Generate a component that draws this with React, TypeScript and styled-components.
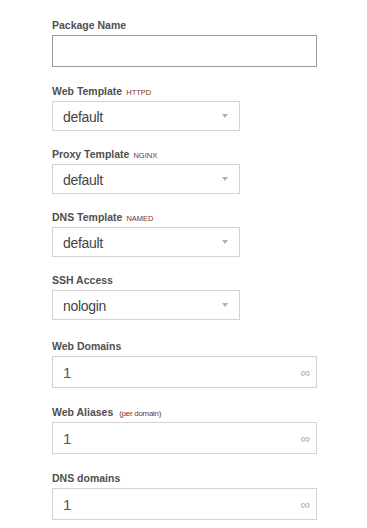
import React from "react";
import styled, { createGlobalStyle } from "styled-components";

const Global = createGlobalStyle`
  html, body { margin: 0; padding: 0; background: #fff; }
  body { font-family: "Liberation Sans", Arial, sans-serif; }
`;

const Form = styled.div`
  display: flex;
  flex-direction: column;
  padding: 18px 0 0 52px;
`;

const Field = styled.div<{ $gap: number }>`
  display: flex;
  flex-direction: column;
  margin-bottom: ${(p) => p.$gap}px;
`;

const Label = styled.div`
  font-size: 10.5px;
  line-height: 12px;
  height: 12px;
  font-weight: bold;
  color: #4f4f4f;
  margin-bottom: 4px;
  padding-top: 1px;
  white-space: nowrap;
`;

const Hint = styled.span<{ $upper?: boolean }>`
  font-weight: normal;
  font-size: ${(p) => (p.$upper ? "7.5px" : "8px")};
  color: #7a3426;
  margin-left: ${(p) => (p.$upper ? "4px" : "6px")};
  letter-spacing: ${(p) => (p.$upper ? "0" : "-0.3px")};
`;

const TextBox = styled.div<{ $dark?: boolean }>`
  box-sizing: border-box;
  width: 265px;
  height: 32px;
  border: 1px solid ${(p) => (p.$dark ? "#9a9a9a" : "#d3d3d3")};
  display: flex;
  align-items: center;
  padding: 0 6px 0 10px;
  font-size: 15px;
  color: #555;
`;

const Value = styled.span`
  flex: 1;
`;

const Infinity = styled.span`
  font-size: 13px;
  color: #aaa;
`;

const SelectBox = styled.div`
  box-sizing: border-box;
  width: 188px;
  height: 30px;
  border: 1px solid #d3d3d3;
  display: flex;
  align-items: center;
  padding: 2px 11px 0 10px;
  font-size: 14px;
  letter-spacing: -0.3px;
  color: #444;
`;

const Arrow = styled.span`
  width: 0;
  height: 0;
  margin-top: -2px;
  border-left: 3.5px solid transparent;
  border-right: 3.5px solid transparent;
  border-top: 4px solid #b0b0b0;
`;

const selects = [
  { label: "Web Template", hint: "HTTPD", value: "default" },
  { label: "Proxy Template", hint: "NGINX", value: "default" },
  { label: "DNS Template", hint: "NAMED", value: "default" },
  { label: "SSH Access", hint: "", value: "nologin" },
];

const limits = [
  { label: "Web Domains", hint: "" },
  { label: "Web Aliases", hint: "(per domain)" },
  { label: "DNS domains", hint: "" },
];

export default function App() {
  return (
    <>
      <Global />
      <Form>
        <Field $gap={17}>
          <Label>Package Name</Label>
          <TextBox $dark />
        </Field>
        {selects.map((s, i) => (
          <Field key={s.label} $gap={i === selects.length - 1 ? 19 : 16}>
            <Label>
              {s.label}
              {s.hint && <Hint $upper>{s.hint}</Hint>}
            </Label>
            <SelectBox>
              <Value>{s.value}</Value>
              <Arrow />
            </SelectBox>
          </Field>
        ))}
        {limits.map((l) => (
          <Field key={l.label} $gap={17}>
            <Label>
              {l.label}
              {l.hint && <Hint>{l.hint}</Hint>}
            </Label>
            <TextBox>
              <Value>1</Value>
              <Infinity>∞</Infinity>
            </TextBox>
          </Field>
        ))}
      </Form>
    </>
  );
}
